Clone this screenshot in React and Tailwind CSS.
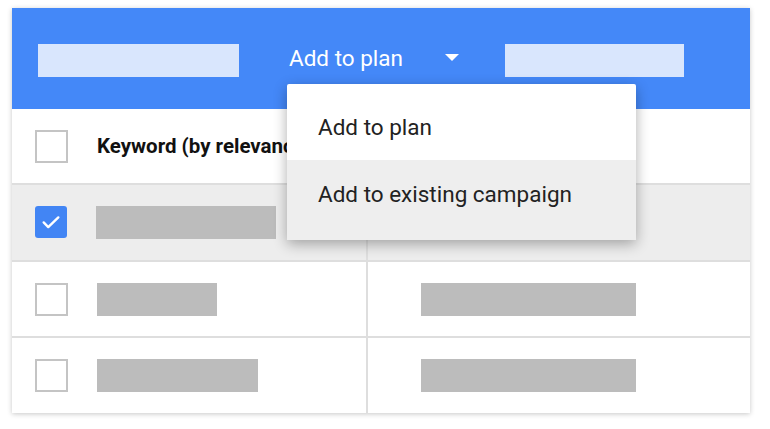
import React from 'react';

const rows = [
  { checked: true, left: 180, right: 0 },
  { checked: false, left: 120, right: 215 },
  { checked: false, left: 161, right: 215 },
];

const Checkbox = ({ checked }) =>
  checked ? (
    <div className="w-[32px] h-[32px] rounded-[3px] bg-[#4285f4] flex items-center justify-center">
      <svg width="22" height="22" viewBox="0 0 24 24" fill="none">
        <path d="M4 12.5l5 5L20 7" stroke="white" strokeWidth="2.6" strokeLinecap="round" strokeLinejoin="round" />
      </svg>
    </div>
  ) : (
    <div className="w-[33px] h-[33px] border-2 border-[#c4c4c4] bg-white" />
  );

const App = () => {
  return (
    <div className="w-[770px] h-[429px] bg-white pt-[8px] pl-[12px] font-['Roboto',sans-serif]">
      <div className="relative w-[738px] h-[405px] flex flex-col bg-white shadow-[0_1px_5px_rgba(0,0,0,0.22)]">
        {/* header bar */}
        <div className="h-[101px] bg-[#4488f8] flex items-center pt-[4px] pl-[26px]">
          <div className="w-[201px] h-[33px] bg-[#d9e6fd]" />
          <span className="ml-[50px] text-[22.5px] text-white leading-none -mt-[5px]">Add to plan</span>
          <svg className="ml-[42px] -mt-[6px]" width="14" height="7" viewBox="0 0 14 7">
            <path d="M0 0h14L7 7z" fill="white" />
          </svg>
          <div className="ml-[46px] w-[179px] h-[33px] bg-[#d9e6fd]" />
        </div>

        {/* table header */}
        <div className="h-[76px] flex items-center border-b-2 border-[#dedede]">
          <div className="w-[356px] h-full flex items-center pl-[23px]">
            <Checkbox checked={false} />
            <span className="ml-[29px] text-[20.5px] font-bold text-[#111] whitespace-nowrap">Keyword (by relevance)</span>
          </div>
        </div>

        {/* rows */}
        {rows.map((r, i) => (
          <div
            key={i}
            className={`flex-1 flex ${i < rows.length - 1 ? 'border-b-2 border-[#dedede]' : ''} ${r.checked ? 'bg-[#ededed]' : 'bg-white'}`}
          >
            <div className="w-[356px] flex items-center pl-[23px] border-r-2 border-[#dedede]">
              <Checkbox checked={r.checked} />
              <div className="ml-[29px] h-[33px] bg-[#bcbcbc]" style={{ width: r.left }} />
            </div>
            <div className="flex-1 flex items-center pl-[53px]">
              {r.right > 0 && <div className="h-[33px] bg-[#bcbcbc]" style={{ width: r.right }} />}
            </div>
          </div>
        ))}

        {/* dropdown menu */}
        <div className="absolute left-[275px] top-[76px] w-[349px] flex flex-col bg-white rounded-[2px] shadow-[0_4px_14px_rgba(0,0,0,0.32)]">
          <div className="h-[76px] flex items-center pl-[31px] pt-[12px] text-[22.5px] text-[#222]">Add to plan</div>
          <div className="h-[80px] flex items-center pl-[31px] pb-[10px] text-[22.5px] text-[#222] bg-[#eeeeee]">Add to existing campaign</div>
        </div>
      </div>
    </div>
  );
};

export default App;
